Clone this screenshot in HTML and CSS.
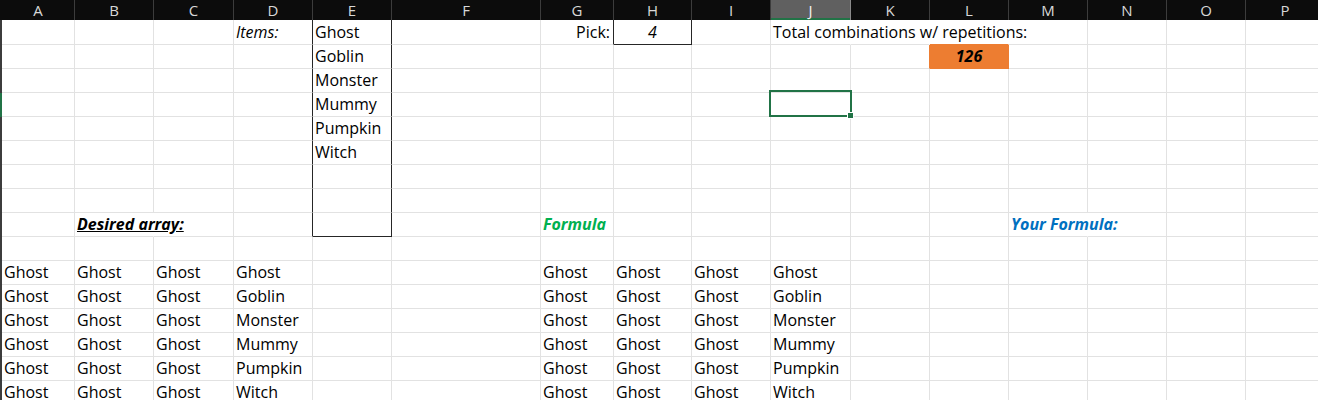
FILE: index.html
```html
<!DOCTYPE html>
<html lang="en">
<head>
<meta charset="utf-8">
<title>Combinations with repetitions</title>
<link rel="stylesheet" href="styles.css">
</head>
<body>
<table class="sheet">
  <colgroup>
    <col class="w-s"><col class="w-a"><col class="w-79"><col class="w-80"><col class="w-79"><col class="w-79"><col class="w-f"><col class="w-g"><col class="w-h"><col class="w-79"><col class="w-80"><col class="w-79"><col class="w-79"><col class="w-79"><col class="w-79"><col class="w-79"><col class="w-79">
  </colgroup>
  <thead>
    <tr class="hdr">
      <th class="s"></th><th>A</th><th>B</th><th>C</th><th>D</th><th>E</th><th>F</th><th>G</th><th>H</th><th>I</th><th class="hsel">J</th><th>K</th><th>L</th><th>M</th><th>N</th><th>O</th><th>P</th>
    </tr>
  </thead>
  <tbody>
    <tr class="first">
      <td class="s"></td><td></td><td></td><td></td><td class="bx i">Items:</td><td class="bx">Ghost</td><td></td><td class="bx r">Pick:</td><td class="bx bb c i">4</td><td></td><td class="nr">Total combinations w/ repetitions:</td><td class="nr"></td><td class="nr ob"></td><td></td><td></td><td></td><td></td>
    </tr>
    <tr>
      <td class="s"></td><td></td><td></td><td></td><td class="bx"></td><td class="bx">Goblin</td><td></td><td></td><td></td><td></td><td></td><td class="or"></td><td class="org c bi">126</td><td></td><td></td><td></td><td></td>
    </tr>
    <tr>
      <td class="s"></td><td></td><td></td><td></td><td class="bx"></td><td class="bx">Monster</td><td></td><td></td><td></td><td></td><td></td><td></td><td></td><td></td><td></td><td></td><td></td>
    </tr>
    <tr>
      <td class="s g"></td><td></td><td></td><td></td><td class="bx"></td><td class="bx">Mummy</td><td></td><td></td><td></td><td></td><td class="sel"></td><td></td><td></td><td></td><td></td><td></td><td></td>
    </tr>
    <tr>
      <td class="s"></td><td></td><td></td><td></td><td class="bx"></td><td class="bx">Pumpkin</td><td></td><td></td><td></td><td></td><td></td><td></td><td></td><td></td><td></td><td></td><td></td>
    </tr>
    <tr>
      <td class="s"></td><td></td><td></td><td></td><td class="bx"></td><td class="bx">Witch</td><td></td><td></td><td></td><td></td><td></td><td></td><td></td><td></td><td></td><td></td><td></td>
    </tr>
    <tr>
      <td class="s"></td><td></td><td></td><td></td><td class="bx"></td><td class="bx"></td><td></td><td></td><td></td><td></td><td></td><td></td><td></td><td></td><td></td><td></td><td></td>
    </tr>
    <tr>
      <td class="s"></td><td></td><td></td><td></td><td class="bx"></td><td class="bx"></td><td></td><td></td><td></td><td></td><td></td><td></td><td></td><td></td><td></td><td></td><td></td>
    </tr>
    <tr>
      <td class="s"></td><td></td><td class="nr bi u">Desired array:</td><td></td><td class="bx"></td><td class="bx bb"></td><td></td><td class="bi green">Formula</td><td></td><td></td><td></td><td></td><td></td><td class="nr bi blue">Your Formula:</td><td></td><td></td><td></td>
    </tr>
    <tr>
      <td class="s"></td><td></td><td></td><td></td><td></td><td></td><td></td><td></td><td></td><td></td><td></td><td></td><td></td><td></td><td></td><td></td><td></td>
    </tr>
    <tr>
      <td class="s"></td><td>Ghost</td><td>Ghost</td><td>Ghost</td><td>Ghost</td><td></td><td></td><td>Ghost</td><td>Ghost</td><td>Ghost</td><td>Ghost</td><td></td><td></td><td></td><td></td><td></td><td></td>
    </tr>
    <tr>
      <td class="s"></td><td>Ghost</td><td>Ghost</td><td>Ghost</td><td>Goblin</td><td></td><td></td><td>Ghost</td><td>Ghost</td><td>Ghost</td><td>Goblin</td><td></td><td></td><td></td><td></td><td></td><td></td>
    </tr>
    <tr>
      <td class="s"></td><td>Ghost</td><td>Ghost</td><td>Ghost</td><td>Monster</td><td></td><td></td><td>Ghost</td><td>Ghost</td><td>Ghost</td><td>Monster</td><td></td><td></td><td></td><td></td><td></td><td></td>
    </tr>
    <tr>
      <td class="s"></td><td>Ghost</td><td>Ghost</td><td>Ghost</td><td>Mummy</td><td></td><td></td><td>Ghost</td><td>Ghost</td><td>Ghost</td><td>Mummy</td><td></td><td></td><td></td><td></td><td></td><td></td>
    </tr>
    <tr>
      <td class="s"></td><td>Ghost</td><td>Ghost</td><td>Ghost</td><td>Pumpkin</td><td></td><td></td><td>Ghost</td><td>Ghost</td><td>Ghost</td><td>Pumpkin</td><td></td><td></td><td></td><td></td><td></td><td></td>
    </tr>
    <tr>
      <td class="s"></td><td>Ghost</td><td>Ghost</td><td>Ghost</td><td>Witch</td><td></td><td></td><td>Ghost</td><td>Ghost</td><td>Ghost</td><td>Witch</td><td></td><td></td><td></td><td></td><td></td><td></td>
    </tr>
  </tbody>
</table>
</body>
</html>
```

FILE: styles.css
```css
html, body {
  margin: 0;
  padding: 0;
  background: #ffffff;
  overflow: hidden;
}

.sheet {
  table-layout: fixed;
  width: 1325px;
  border-collapse: separate;
  border-spacing: 0;
  font-family: "Open Sans", "Liberation Sans", sans-serif;
  font-size: 16px;
  color: #000000;
}

.w-s { width: 2px; }
.w-a { width: 73px; }
.w-79 { width: 79px; }
.w-80 { width: 80px; }
.w-f { width: 149px; }
.w-g { width: 73px; }
.w-h { width: 78px; }

/* header row */
.hdr { height: 20px; }
.hdr th {
  background: #0c0c0c;
  color: #d8d8d8;
  font-family: "Open Sans", "Liberation Sans", sans-serif;
  font-size: 15px;
  font-weight: 400;
  line-height: 20px;
  padding: 0;
  text-align: center;
  border-right: 1px solid #3c3c3c;
  overflow: hidden;
}
.hdr th.s { border-right: 0; }
.hdr th.hsel {
  background: #606060;
  color: #f2f2f2;
  border-right-color: #8a8a8a;
  box-shadow: inset 0 -2px 0 #217346;
}

/* body cells */
tbody tr { height: 24px; }
tbody tr.first { height: 25px; }
tbody td {
  padding: 0 2px 1px;
  vertical-align: bottom;
  line-height: 22px;
  white-space: nowrap;
  overflow: visible;
  border-right: 1px solid #e2e2e2;
  border-bottom: 1px solid #e2e2e2;
}

td.s {
  padding: 0;
  background: #3c3c3c;
  border-right: 0;
  border-bottom: 1px solid #3c3c3c;
}
td.s.g {
  background: #217346;
  border-bottom-color: #217346;
}

td.nr { border-right-color: transparent; }
td.bx { border-right-color: #262626; }
td.bb { border-bottom-color: #262626; }

td.r { text-align: right; padding-right: 3px; }
td.c { text-align: center; }
td.i { font-style: italic; }
td.bi { font-style: italic; font-weight: 700; }
td.u { text-decoration: underline; }
td.green { color: #00b050; }
td.blue { color: #0070c0; }

td.org {
  background: #ed7d31;
  border-right-color: #ed7d31;
  border-bottom-color: #ed7d31;
}
td.or { border-right-color: #ed7d31; }
td.ob { border-bottom-color: #ed7d31; }

td.sel { position: relative; }
td.sel::after {
  content: "";
  position: absolute;
  left: -2px;
  top: -3px;
  right: -2px;
  bottom: -1px;
  border: 2px solid #217346;
}
td.sel::before {
  content: "";
  position: absolute;
  right: -4px;
  bottom: -3px;
  width: 5px;
  height: 5px;
  background: #217346;
  border: 1px solid #ffffff;
  z-index: 1;
}
```
